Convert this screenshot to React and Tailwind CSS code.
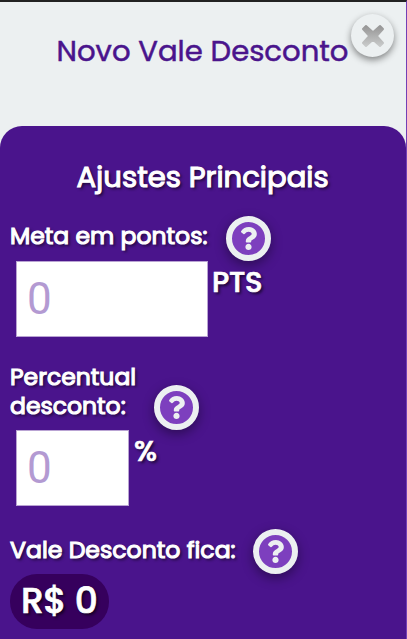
import React from 'react';
import { FaQuestion } from 'react-icons/fa';

function Help() {
  return (
    <button aria-label="Ajuda" className="flex size-[45px] shrink-0 items-center justify-center rounded-full border-[6px] border-[#ecf0f1] bg-[#7d3fbe] text-[#ecf0f1] shadow-[0_4px_12px_rgba(0,0,0,0.4)]">
      <FaQuestion className="size-[23px]" />
    </button>
  );
}

function Field({ className }) {
  return (
    <input
      placeholder="0"
      className={`ml-4 block h-[76px] shrink-0 rounded-none border border-[#b9a3d3] bg-white pl-[10px] font-[Roboto,sans-serif] text-[44px] leading-none font-normal text-[#4a148c] outline-none [-webkit-text-stroke:0px] placeholder:text-[#b39ad2] ${className}`}
    />
  );
}

const shadow = '[text-shadow:2px_2px_3px_rgba(0,0,0,0.65)]';
const bold = 'font-normal [-webkit-text-stroke:1.1px_white]';

export default function App() {
  return (
    <main className="flex h-[639px] w-[407px] flex-col overflow-hidden border-t-2 border-r border-t-[#222222] border-r-[#7340b5] bg-[#ecf0f1] font-[Poppins,sans-serif]">
      <header className="relative h-[123.6px] shrink-0 pt-[28px]">
        <h1 className="ml-[56.5px] text-[29.1px] leading-[42px] font-normal whitespace-nowrap text-[#4a148c] [-webkit-text-stroke:0.5px_#4a148c]">Novo Vale Desconto</h1>
        <button aria-label="Fechar" className="absolute top-[12px] left-[351px] flex size-[43px] items-center justify-center rounded-full bg-[#ecf0f1] shadow-[0_3px_7px_rgba(0,0,0,0.45)]">
          <svg viewBox="0 0 24 24" className="size-6">
            <defs>
              <linearGradient id="close" x1="0" y1="0" x2="0" y2="1">
                <stop offset="0" stopColor="#969696" />
                <stop offset="1" stopColor="#c8caca" />
              </linearGradient>
            </defs>
            <path fill="url(#close)" stroke="url(#close)" strokeWidth="2" strokeLinejoin="round" d="M5 2 12 8.3 19 2 22 5 15.7 12 22 19 19 22 12 15.7 5 22 2 19 8.3 12 2 5Z" />
          </svg>
        </button>
      </header>

      <section className={`flex-1 rounded-t-[22px] bg-[#4a148c] pt-[30px] text-white ${shadow} ${bold}`}>
        <h2 className="ml-[76.5px] pt-[0.6px] text-[29.1px] leading-[41.4px] font-normal whitespace-nowrap">Ajustes Principais</h2>

        <div className="mt-[18px] flex h-[45px] items-start">
          <label className="ml-[10px] w-[215.5px] pt-[3.7px] text-[23.5px] leading-[34px] whitespace-nowrap">Meta em pontos:</label>
          <Help />
        </div>
        <div className="flex h-[76px] items-start">
          <Field className="w-[192px]" />
          <span className="ml-[4px] pt-[0.7px] text-[29px] leading-[42px] font-medium tracking-[-0.3px] [-webkit-text-stroke:0.7px_white]">PTS</span>
        </div>

        <div className="mt-[25px] flex h-[68px] items-end">
          <label className="ml-[10px] w-[144px] self-start pt-[0.4px] text-[23.5px] leading-[29px]">Percentual desconto:</label>
          <Help />
        </div>
        <div className="flex h-[76px] items-start">
          <Field className="w-[113px]" />
          <span className="ml-[5px] pt-[0.7px] text-[29px] leading-[42px] font-medium [-webkit-text-stroke:0.7px_white]">%</span>
        </div>

        <div className="mt-[23px] flex h-[45px] items-start">
          <label className="ml-[10px] w-[243px] pt-[4.4px] text-[23.6px] leading-[34px] whitespace-nowrap">Vale Desconto fica:</label>
          <Help />
        </div>
        <div className="ml-[10px] flex h-[55px] w-[99px] items-center rounded-[27px] bg-[#36005d] pl-[11px] text-[36px] leading-none font-medium tracking-[-0.6px] whitespace-nowrap [-webkit-text-stroke:0.7px_white]">R$ 0</div>
      </section>
    </main>
  );
}
